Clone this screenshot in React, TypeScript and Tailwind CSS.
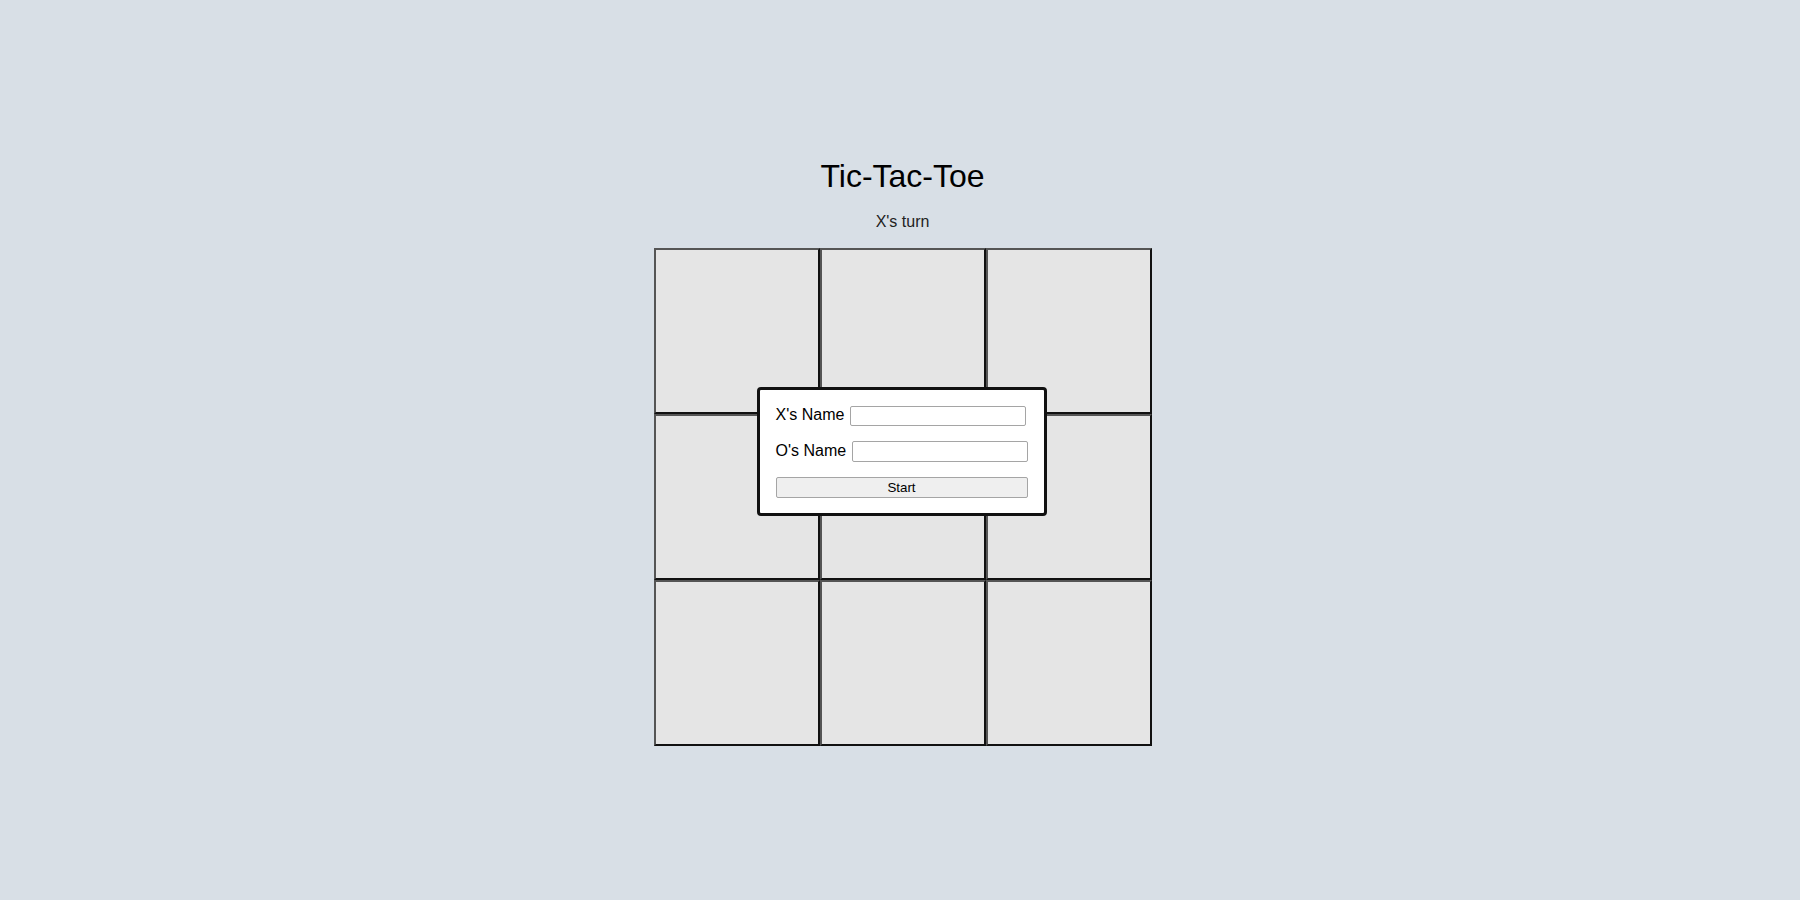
const cells = Array.from({ length: 9 }, (_, i) => i);

const App = () => {
  return (
    <div className="min-h-screen bg-[#d8dfe6] flex flex-col items-center justify-center pl-[5px] pt-[3px] font-['Liberation_Sans',Arial,sans-serif] text-black">
      <h1 className="text-[32px] leading-[37px]">Tic-Tac-Toe</h1>
      <p className="mt-[18px] text-[16px] leading-[18px] text-[#222]">X's turn</p>
      <div className="mt-[17px] grid grid-cols-[repeat(3,166px)] grid-rows-[repeat(3,166px)]">
        {cells.map((id) => (
          <button
            key={id}
            className="bg-[#e5e5e5] border-2 border-t-[#555] border-l-[#555] border-b-[#111] border-r-[#111]"
          />
        ))}
      </div>

      <div className="fixed inset-0 flex items-center justify-center pl-[3px] pt-[2px]">
        <div className="bg-white border-[3px] border-[#111] rounded-[4px] px-4 pt-4 pb-[15px] w-[290px] leading-[18px]">
          <div className="flex items-baseline gap-[6px] text-[16px] whitespace-nowrap">
            <label className="shrink-0">X's Name</label>
            <input
              type="text"
              className="shrink-0 w-[176px] h-[20px] bg-white border border-[#a5a5a5] rounded-[2px] px-[2px] text-[13.33px] leading-[15px]"
            />
          </div>
          <div className="mt-[15px] flex items-baseline gap-[6px] text-[16px] whitespace-nowrap">
            <label className="shrink-0">O's Name</label>
            <input
              type="text"
              className="shrink-0 w-[176px] h-[21px] bg-white border border-[#a5a5a5] rounded-[2px] px-[2px] text-[13.33px] leading-[15px]"
            />
          </div>
          <button className="mt-[15px] block w-full h-[21px] bg-[#efefef] border border-[#a5a5a5] rounded-[2px] text-[13.33px] leading-[15px]">
            Start
          </button>
        </div>
      </div>
    </div>
  );
};

export default App;
